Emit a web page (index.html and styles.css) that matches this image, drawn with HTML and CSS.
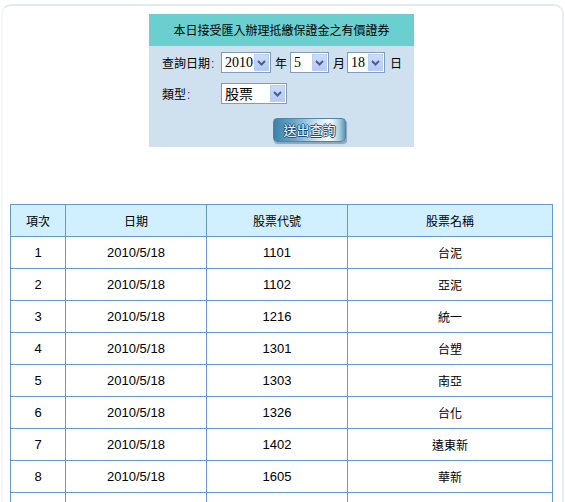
FILE: index.html
```html
<!DOCTYPE html>
<html lang="zh-Hant">
<head>
<meta charset="utf-8">
<title>本日接受匯入辦理抵繳保證金之有價證券</title>
<link rel="stylesheet" href="styles.css">
</head>
<body>
<div class="frame">
  <div class="panel">
    <div class="panel-head">本日接受匯入辦理抵繳保證金之有價證券</div>
    <div class="panel-body">
      <div class="row">
        <span class="label">查詢日期<span class="colon">:</span></span>
        <span class="sel w-year"><span class="val">2010</span><span class="arr"><svg width="9" height="6" viewBox="0 0 9 6"><path d="M1 1 L4.5 4.5 L8 1" fill="none" stroke="#4d6185" stroke-width="2"/></svg></span></span>
        <span class="unit u-year">年</span>
        <span class="sel w-month"><span class="val">5</span><span class="arr"><svg width="9" height="6" viewBox="0 0 9 6"><path d="M1 1 L4.5 4.5 L8 1" fill="none" stroke="#4d6185" stroke-width="2"/></svg></span></span>
        <span class="unit u-month">月</span>
        <span class="sel w-day"><span class="val">18</span><span class="arr"><svg width="9" height="6" viewBox="0 0 9 6"><path d="M1 1 L4.5 4.5 L8 1" fill="none" stroke="#4d6185" stroke-width="2"/></svg></span></span>
        <span class="unit u-day">日</span>
      </div>
      <div class="row row2">
        <span class="label">類型<span class="colon">:</span></span>
        <span class="sel w-type"><span class="val val-zh">股票</span><span class="arr"><svg width="9" height="6" viewBox="0 0 9 6"><path d="M1 1 L4.5 4.5 L8 1" fill="none" stroke="#4d6185" stroke-width="2"/></svg></span></span>
      </div>
      <div class="btn-row">
        <button class="btn" type="button">送出查詢</button>
      </div>
    </div>
  </div>

  <table class="grid">
    <thead>
      <tr><th class="c1">項次</th><th class="c2">日期</th><th class="c3">股票代號</th><th class="c4">股票名稱</th></tr>
    </thead>
    <tbody>
      <tr><td>1</td><td>2010/5/18</td><td>1101</td><td class="zh">台泥</td></tr>
      <tr><td>2</td><td>2010/5/18</td><td>1102</td><td class="zh">亞泥</td></tr>
      <tr><td>3</td><td>2010/5/18</td><td>1216</td><td class="zh">統一</td></tr>
      <tr><td>4</td><td>2010/5/18</td><td>1301</td><td class="zh">台塑</td></tr>
      <tr><td>5</td><td>2010/5/18</td><td>1303</td><td class="zh">南亞</td></tr>
      <tr><td>6</td><td>2010/5/18</td><td>1326</td><td class="zh">台化</td></tr>
      <tr><td>7</td><td>2010/5/18</td><td>1402</td><td class="zh">遠東新</td></tr>
      <tr><td>8</td><td>2010/5/18</td><td>1605</td><td class="zh">華新</td></tr>
      <tr><td></td><td></td><td></td><td></td></tr>
    </tbody>
  </table>
</div>
</body>
</html>
```

FILE: styles.css
```css
html, body {
  margin: 0;
  padding: 0;
  background: #ffffff;
}
body {
  font-family: "Noto Sans CJK TC", "Liberation Sans", sans-serif;
  color: #000;
  height: 502px;
  overflow: hidden;
}
.frame {
  box-sizing: border-box;
  margin: 4px 1px 0 1px;
  border-top: 2px solid #e2eaf2;
  border-right: 2px solid #e6edf4;
  border-left: 2px solid #f4f7fa;
  border-radius: 10px 10px 0 0;
  padding: 8px 0 0 0;
  height: 498px;
  overflow: hidden;
}
.panel {
  margin-left: 146px;
  width: 265px;
  background: #cfe0ee;
}
.panel-head {
  height: 32px;
  background: #6ccfcf;
  display: flex;
  align-items: center;
  justify-content: center;
  font-size: 12px;
  line-height: 12px;
}
.panel-body {
  padding: 6px 0 7px 13px;
}
.row {
  display: flex;
  align-items: center;
  height: 21px;
  font-size: 12px;
}
.row2 {
  margin-top: 10px;
}
.label {
  width: 59px;
  flex: none;
}
.colon {
  color: #660099;
  font-family: "Liberation Sans", sans-serif;
  margin-left: 1px;
}
.sel {
  box-sizing: border-box;
  height: 21px;
  background: #fff;
  border: 1px solid #7f9db9;
  display: flex;
  align-items: center;
  justify-content: space-between;
  flex: none;
}
.val {
  font-family: "Liberation Serif", serif;
  font-size: 14px;
  line-height: 17px;
  padding-left: 3px;
}
.val-zh {
  font-family: "Noto Sans CJK TC", sans-serif;
  font-size: 14px;
}
.arr {
  width: 15px;
  height: 17px;
  margin-right: 1px;
  background: linear-gradient(180deg, #cbdcfd 0%, #b4c9f5 100%);
  border: 1px solid #bccef4;
  box-sizing: border-box;
  display: flex;
  align-items: center;
  justify-content: center;
}
.w-year { width: 50px; }
.w-month { width: 39px; }
.w-day { width: 38px; }
.w-type { width: 66px; }
.unit { flex: none; }
.u-year { margin: 0 3px 0 4px; }
.u-month { margin: 0 2px 0 4px; }
.u-day { margin-left: 5px; }
.btn-row {
  margin-top: 12px;
  padding-left: 111px;
  height: 24px;
}
.btn {
  width: 73px;
  height: 24px;
  padding: 0;
  border: 1px solid #4b88ab;
  border-radius: 4px;
  background: linear-gradient(90deg, #3c82aa 0%, #6ea9c8 30%, #cfe7f3 62%, #ffffff 78%, #a9cde0 92%, #5a95b7 100%);
  box-shadow: 1px 2px 1px rgba(60, 90, 120, 0.45);
  color: #ffffff;
  font-family: "Noto Sans CJK TC", sans-serif;
  font-size: 13px;
  font-weight: normal;
  text-shadow: -1px 0 #1d4f7a, 1px 0 #1d4f7a, 0 -1px #1d4f7a, 0 1px #1d4f7a;
}
.grid {
  margin: 57px 0 0 7px;
  border-collapse: collapse;
  width: 542px;
  table-layout: fixed;
}
.grid th, .grid td {
  border: 1px solid #6699cc;
  height: 31px;
  padding: 0;
  text-align: center;
  vertical-align: middle;
}
.grid th {
  background: #d0f0ff;
  font-weight: normal;
  font-size: 12px;
}
.grid td {
  font-family: "Liberation Sans", Arial, sans-serif;
  font-size: 13px;
}
.grid td.zh {
  font-family: "Noto Sans CJK TC", sans-serif;
  font-size: 12px;
}
.c1 { width: 54px; }
.c2 { width: 140px; }
.c3 { width: 140px; }
.c4 { width: 204px; }
```
